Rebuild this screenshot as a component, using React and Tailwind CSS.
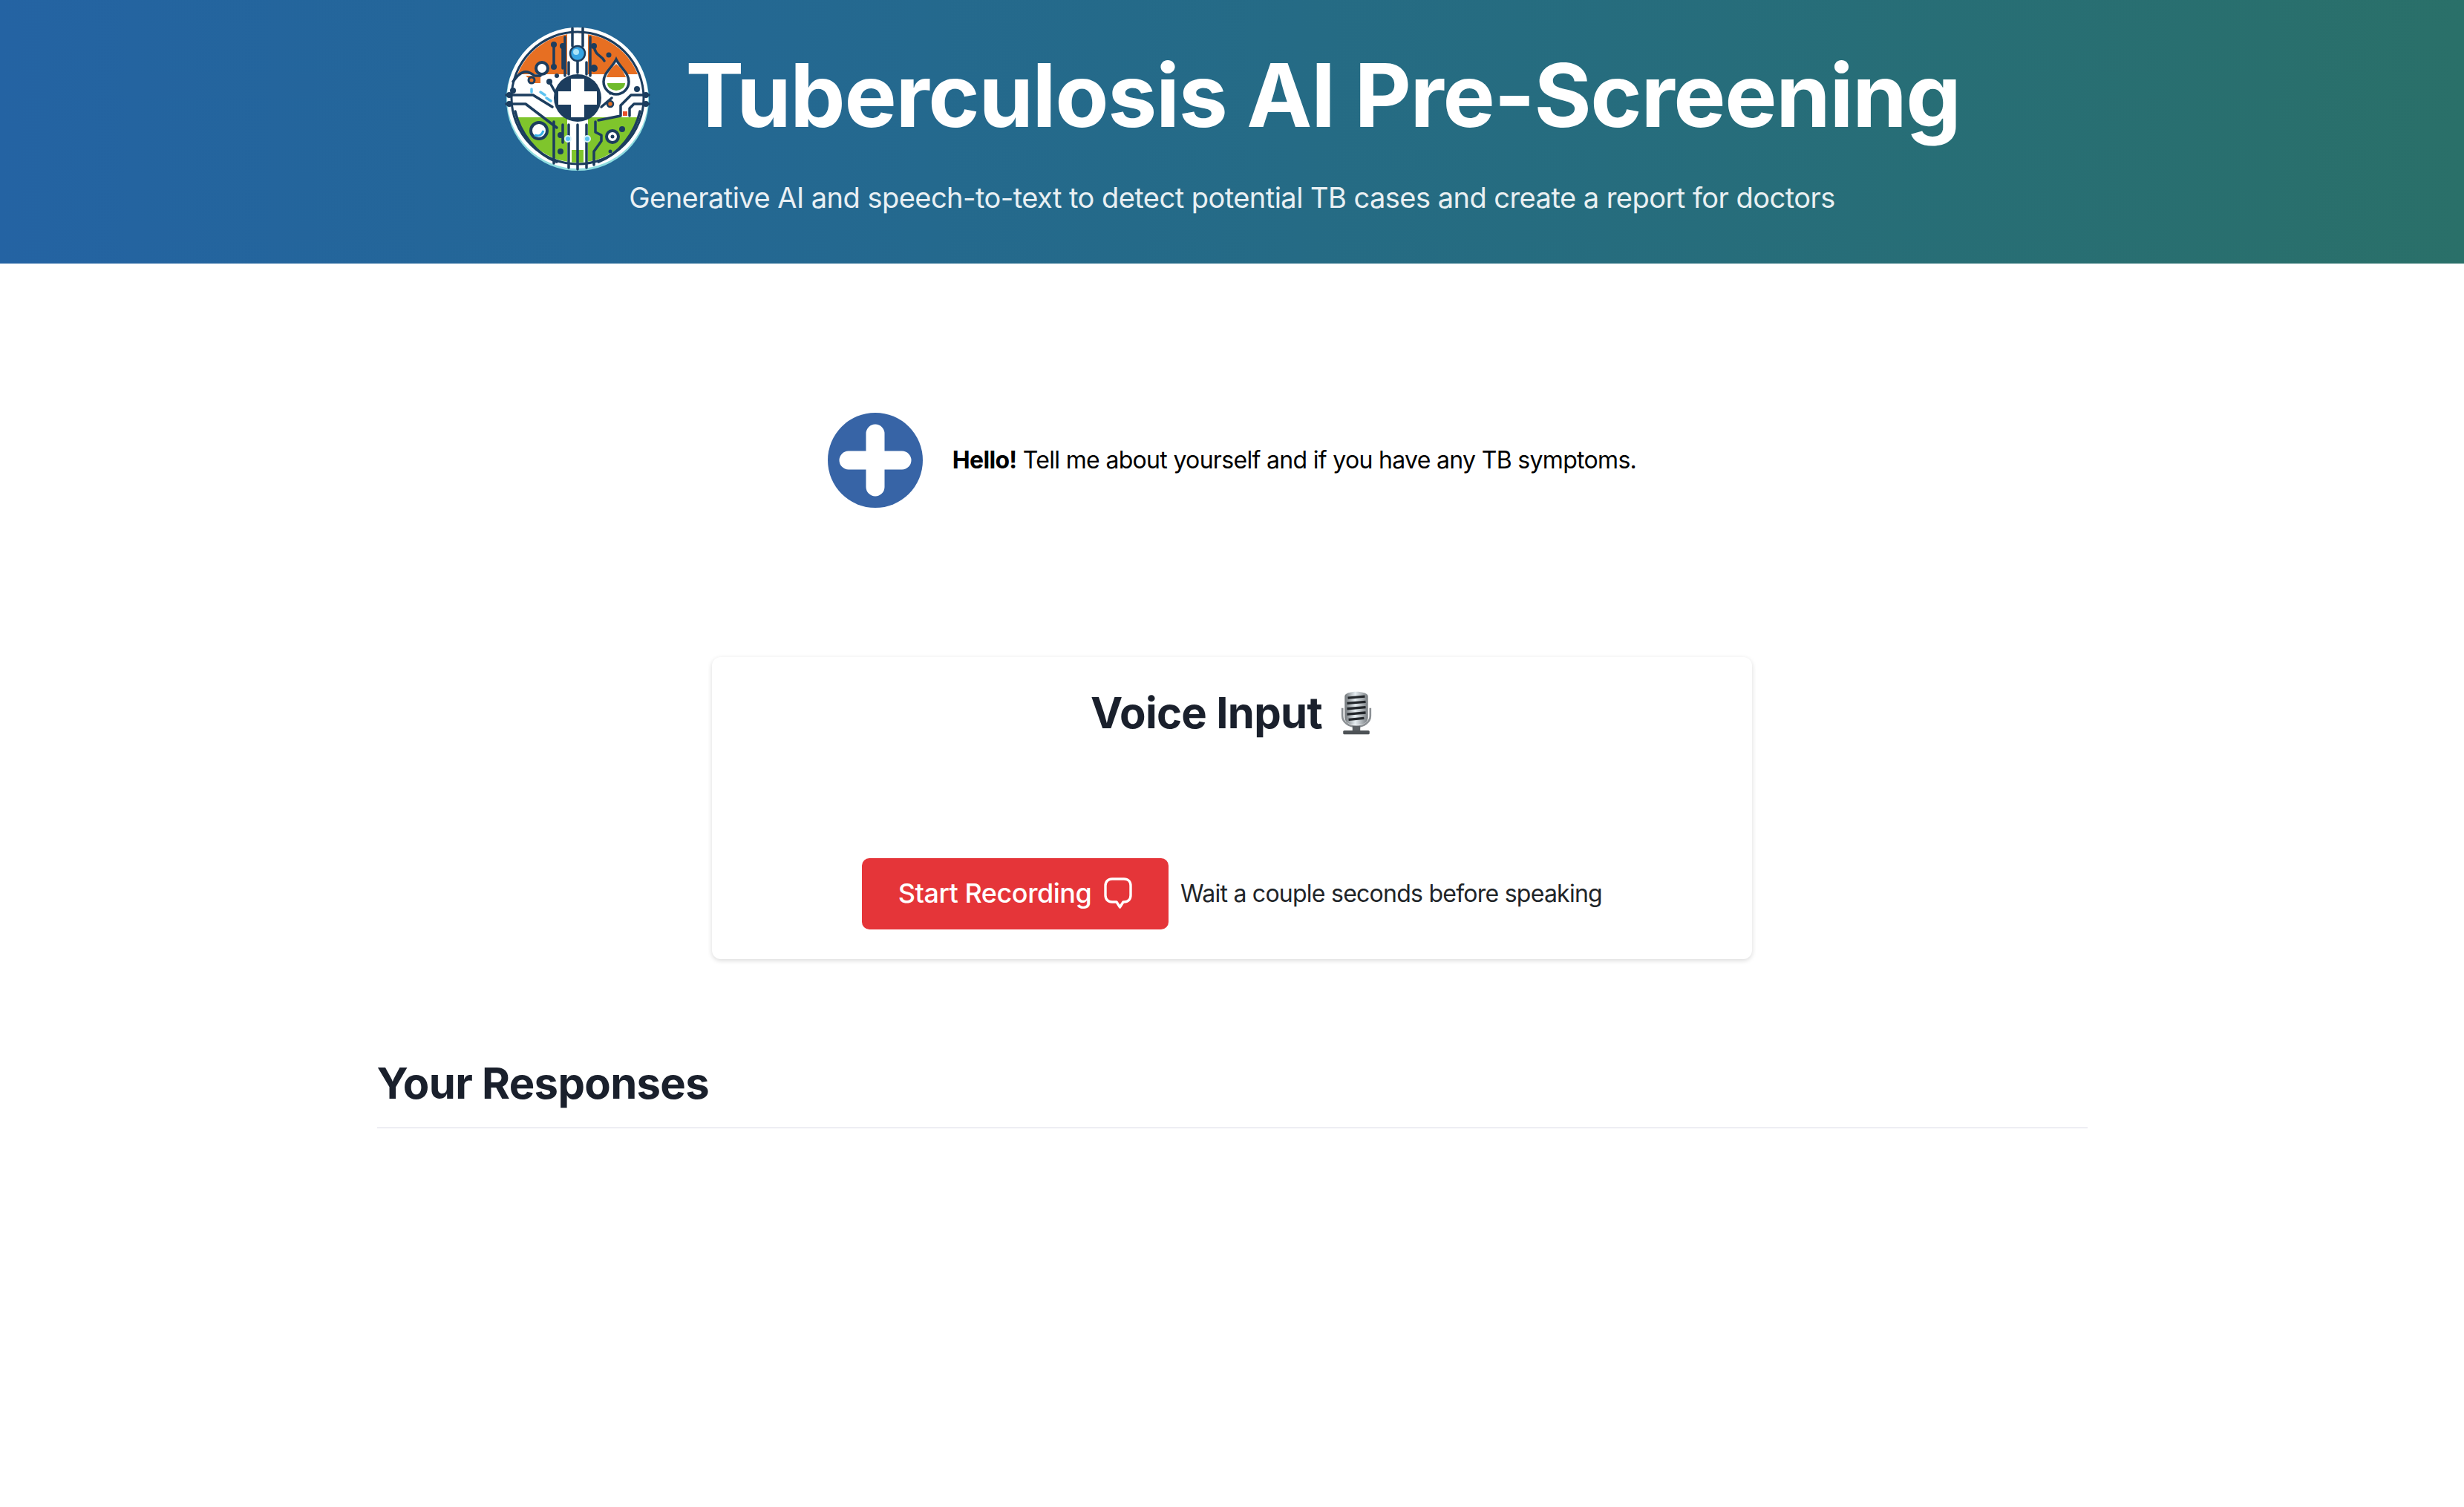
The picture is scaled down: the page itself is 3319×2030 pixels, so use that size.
const Logo = () => (
  <svg viewBox="0 0 200 200" className="w-[200px] h-[200px] shrink-0">
    <defs>
      <clipPath id="disc">
        <circle cx="100" cy="100" r="87" />
      </clipPath>
    </defs>
    <circle cx="100" cy="102" r="96" fill="#8fdde0" />
    <circle cx="100" cy="100" r="95" fill="#fff" />
    <circle cx="100" cy="100" r="89" fill="#fff" stroke="#1c3d5e" strokeWidth="3" />
    <g clipPath="url(#disc)">
      <rect x="0" y="0" width="200" height="68" fill="#e76f22" />
      <rect x="0" y="68" width="200" height="58" fill="#fff" />
      <rect x="0" y="126" width="200" height="74" fill="#7fc52c" />
      <rect x="86" y="0" width="28" height="200" fill="#fff" />
      <rect x="92" y="170" width="16" height="30" fill="#7fc52c" />
      <path d="M10 70 H30 L42 80 H50 V70 H8 Z" fill="#e76f22" />
    </g>
    <g fill="none" stroke="#1c3d5e" strokeWidth="3.5" strokeLinecap="round" strokeLinejoin="round">
      <path d="M93 6 V30 M107 6 V30 M88 52 V68 M100 50 V66 M112 52 V68" />
      <path d="M83 18 V70 M117 18 V70" />
      <path d="M68 28 V58 M80 28 V60" />
      <path d="M122 30 C124 44 132 42 136 50" />
      <path d="M13 78 C24 62 32 62 42 70 H50" />
      <path d="M4 96 H40 L66 112" />
      <path d="M4 108 H30 L72 140" />
      <path d="M16 118 C22 146 44 176 72 186" />
      <path d="M68 132 V188 M80 136 V160" />
      <path d="M88 136 V194 M100 136 V196 M112 136 V194" />
      <path d="M124 132 V146 L132 150 V158 L122 172 V190" />
      <path d="M196 96 H172 L158 110 V124 L128 130" />
      <path d="M196 108 H176 L170 114 V124" />
      <path d="M184 118 C178 146 156 176 128 186" />
      <path d="M132 112 L146 100 M144 94 V84" />
      <path d="M62 78 L72 96" />
    </g>
    <g fill="#1c3d5e">
      <circle cx="68" cy="28" r="4" />
      <circle cx="80" cy="30" r="4" />
      <circle cx="68" cy="58" r="4" />
      <circle cx="122" cy="60" r="5" />
      <circle cx="122" cy="30" r="4" />
      <circle cx="142" cy="42" r="3.5" />
      <circle cx="13" cy="90" r="4" />
      <circle cx="62" cy="78" r="4" />
      <circle cx="72" cy="70" r="3" />
      <circle cx="180" cy="88" r="4" />
      <circle cx="8" cy="96" r="4" />
      <circle cx="8" cy="108" r="4" />
      <circle cx="192" cy="96" r="4" />
      <circle cx="192" cy="108" r="4" />
      <circle cx="77" cy="150" r="4" />
      <circle cx="77" cy="172" r="4" />
      <circle cx="160" cy="142" r="4" />
      <circle cx="144" cy="172" r="2.5" />
    </g>
    <circle cx="52" cy="60" r="8" fill="#fff" stroke="#1c3d5e" strokeWidth="4" />
    <circle cx="38" cy="76" r="4" fill="#e76f22" stroke="#1c3d5e" strokeWidth="3" />
    <circle cx="48" cy="144" r="11" fill="#fff" stroke="#1c3d5e" strokeWidth="4" />
    <path d="M42 150 C48 152 52 150 54 144" fill="none" stroke="#35b0e6" strokeWidth="3" />
    <circle cx="147" cy="152" r="8" fill="#fff" stroke="#1c3d5e" strokeWidth="4" />
    <circle cx="147" cy="152" r="2.5" fill="#1c3d5e" />
    <circle cx="100" cy="40" r="10" fill="#37a4e4" stroke="#1c3d5e" strokeWidth="2.5" />
    <circle cx="98" cy="38" r="4" fill="#a9e3f8" />
    <circle cx="87" cy="155" r="4" fill="#5cc3f1" stroke="#d8f2fb" strokeWidth="2" />
    <circle cx="113" cy="155" r="4" fill="#5cc3f1" stroke="#d8f2fb" strokeWidth="2" />
    <path d="M152 48 C146 60 135 66 135 78 A17 17 0 0 0 169 78 C169 66 158 60 152 48 Z" fill="#fff" stroke="#1c3d5e" strokeWidth="3.5" />
    <path d="M139 72 C144 60 148 58 152 54 C156 58 160 60 165 72 Z" fill="#e76f22" />
    <path d="M140 80 H164 A12 10 0 0 1 140 80 Z" fill="#6fbb2b" />
    <circle cx="144" cy="108" r="4" fill="#e76f22" stroke="#1c3d5e" strokeWidth="2.5" />
    <rect x="161" y="118" width="6" height="6" fill="#e8502c" />
    <path d="M38 88 V92 M50 92 L56 96 M58 100 L64 104" stroke="#5cc3f1" strokeWidth="3.5" strokeLinecap="round" />
    <circle cx="100" cy="100" r="32" fill="#1c3d5e" />
    <path d="M91 74 H109 V91 H126 V109 H109 V126 H91 V109 H74 V91 H91 Z" fill="#fff" />
  </svg>
);

const CrossBadge = () => (
  <svg viewBox="0 0 128 128" className="w-[128px] h-[128px] shrink-0">
    <circle cx="64" cy="64" r="64" fill="#3764a6" />
    <path d="M64 28 V100 M28 64 H100" stroke="#fff" strokeWidth="25" strokeLinecap="round" />
  </svg>
);

const MicEmoji = () => (
  <svg viewBox="0 0 44 60" className="w-[46px] h-[64px]">
    <defs>
      <linearGradient id="chrome" x1="0" x2="1" y1="0" y2="0">
        <stop offset="0" stopColor="#6f7478" />
        <stop offset="0.45" stopColor="#e6edf1" />
        <stop offset="1" stopColor="#777c80" />
      </linearGradient>
    </defs>
    <path d="M7 9 C7 1 37 1 37 9 V36 C37 44 29 46 22 46 C15 46 7 44 7 36 Z" fill="url(#chrome)" />
    <path d="M11 11 L33 9 M10 18 L34 16 M10 25 L34 23 M10 32 L34 30 M12 39 L32 37" stroke="#22262a" strokeWidth="3.2" />
    <path d="M4 24 V34 C4 42 12 48 22 48 C32 48 40 42 40 34 V24" fill="none" stroke="#8b9094" strokeWidth="2.5" />
    <rect x="17" y="47" width="10" height="7" fill="#5b6064" />
    <rect x="5" y="53" width="34" height="5" rx="1.5" fill="#4d5256" />
  </svg>
);

// speech bubble on the record button
const BubbleIcon = () => (
  <svg viewBox="0 0 38 42" className="w-[38px] h-[42px]" fill="none" stroke="#fff" strokeWidth="3.4" strokeLinejoin="round">
    <path d="M11 2 H27 C32.5 2 36 5.5 36 11 V24 C36 29.5 32.5 33 27 33 H26 L21.5 40 L17 33 H11 C5.5 33 2 29.5 2 24 V11 C2 5.5 5.5 2 11 2 Z" />
  </svg>
);

export default function App() {
  return (
    <div className="min-h-[2030px] bg-white font-['Inter',sans-serif] text-[#1a202c]">
      <header className="h-[355px] bg-gradient-to-r from-[#2463a3] to-[#2a7069] flex flex-col items-center pt-[32px]">
        <div className="flex items-center gap-[45px] h-[200px]">
          <Logo />
          <h1 className="text-[118px] leading-none font-[750] text-white tracking-[-1.3px] -mt-[8px]">
            Tuberculosis AI Pre-Screening
          </h1>
        </div>
        <p className="mt-[10px] text-[38px] leading-[48px] tracking-[-0.53px] text-white/90">
          Generative AI and speech-to-text to detect potential TB cases and create a report for doctors
        </p>
      </header>

      <main className="flex flex-col items-center">
        <div className="mt-[201px] flex items-center gap-[40px]">
          <CrossBadge />
          <p className="text-[32px] tracking-[-0.68px] text-black">
            <strong className="font-bold">Hello!</strong> Tell me about yourself and if you have any TB symptoms.
          </p>
        </div>

        <section className="mt-[201px] w-[1401px] h-[407px] rounded-[12px] bg-white shadow-[0_2px_6px_rgba(0,0,0,0.15)] flex flex-col items-center">
          <h2 className="mt-[39px] text-[58px] leading-[72px] tracking-[-0.7px] font-bold flex items-center gap-[23px]">
            Voice Input <MicEmoji />
          </h2>
          <div className="mt-[160px] flex items-center gap-[16px]">
            <button className="w-[413px] h-[96px] rounded-[10px] bg-[#e53539] text-white text-[36px] tracking-[-0.45px] font-[550] flex items-center justify-center gap-[17px] pb-[2px]">
              Start Recording <BubbleIcon />
            </button>
            <span className="text-[32px] tracking-[-0.75px] text-[#212529]">Wait a couple seconds before speaking</span>
          </div>
        </section>

        <section className="mt-[131px] w-[2304px]">
          <h2 className="text-[58px] leading-[72px] tracking-[-0.7px] font-bold pb-[23px] border-b-2 border-[#eeeef3]">Your Responses</h2>
        </section>
      </main>
    </div>
  );
}
